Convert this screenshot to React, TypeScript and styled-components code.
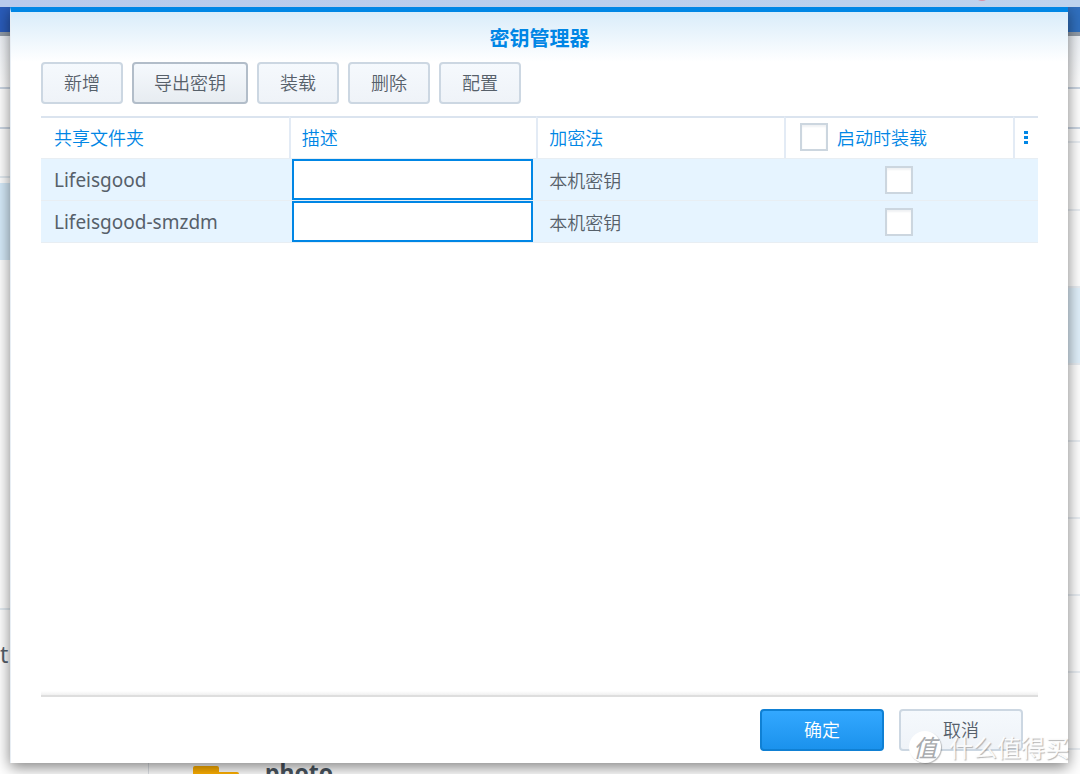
import React, { useState } from "react";
import styled, { createGlobalStyle } from "styled-components";

const GlobalStyle = createGlobalStyle`
  *, *::before, *::after { box-sizing: border-box; }
  body {
    margin: 0;
    font-family: "Noto Sans CJK SC", "Noto Sans", sans-serif;
    font-size: 18px;
    font-weight: 350;
    color: #56606a;
  }
  button, input { font: inherit; color: inherit; }
`;

const Desktop = styled.div`
  position: relative;
  min-height: 100vh;
  padding: 7px 12px 11px 10px;
  display: flex;
  overflow: hidden;
`;

/* The window that lies behind the dialog */
const BackWindow = styled.div`
  position: absolute;
  inset: 0;
  overflow: hidden;
  display: flex;
  flex-direction: column;
  background: #fff;
  font-family: "Noto Sans", "Noto Sans CJK SC", sans-serif;
`;

const Wallpaper = styled.div`
  position: relative;
  z-index: 1;
  height: 7px;
  flex: none;
  display: flex;
  justify-content: flex-end;
  padding-right: 90px;
  background: linear-gradient(90deg, #b8caec, #bdd3ee);
`;

const Badge = styled.span`
  width: 16px;
  height: 16px;
  margin-top: -15px;
  border-radius: 50%;
  background: #d88fa8;
`;

const BackTitle = styled.div`
  height: 29px;
  flex: none;
  background: linear-gradient(90deg, #2a5cba, #3070bf);
  border-bottom: 4px solid #929ca8;
`;

const BackBar = styled.div<{ $height: number; $shade?: boolean }>`
  height: ${(p) => p.$height}px;
  flex: none;
  border-bottom: 2px solid #cbd6e3;
  background: ${(p) => (p.$shade ? "linear-gradient(#edf1f6, #fff)" : "#fff")};
`;

const BackBody = styled.div`
  flex: 1;
  display: flex;
`;

const Side = styled.div`
  width: 149px;
  flex: none;
  border-right: 1px solid #dfe3e8;
`;

const SideItem = styled.div<{ $height: number; $active?: boolean; $line?: boolean }>`
  height: ${(p) => p.$height}px;
  background: ${(p) => (p.$active ? "#d6ebfa" : "transparent")};
  border-bottom: ${(p) => (p.$line ? "2px solid #e3ebf1" : "0")};
  font-size: 23px;
  line-height: 32px;
  font-weight: 400;
  display: flex;
  align-items: flex-end;
`;

const Folders = styled.div`
  flex: 1;
  padding-top: 12px;
`;

const FolderRow = styled.div<{ $active?: boolean; $height?: number }>`
  height: ${(p) => p.$height ?? 77}px;
  border-bottom: 2px solid #e9eef3;
  background: ${(p) => (p.$active ? "#e0f0fb" : "transparent")};
`;

const LastFolder = styled.div`
  display: flex;
  align-items: flex-start;
  gap: 26px;
  padding: 7px 44px;
  font-size: 23px;
  line-height: 30px;
  font-weight: 700;
  color: #4a5560;

  svg { margin-top: 9px; }
`;

const Dialog = styled.section`
  position: relative;
  flex: 1;
  display: flex;
  flex-direction: column;
  padding: 0 30px 12px;
  border-top: 5px solid #0086e5;
  border-left: 1px solid #e8eef4;
  background: linear-gradient(#d9ecfa, #fff 50px);
  box-shadow: 0 4px 14px rgba(0, 0, 0, 0.5);
`;

const Title = styled.h1`
  margin: 0;
  height: 50px;
  font-size: 20px;
  line-height: 52px;
  font-weight: 700;
  text-align: center;
  color: #0086e5;
`;

const Toolbar = styled.div`
  display: flex;
  gap: 9px;
  margin-bottom: 12px;
`;

const Button = styled.button<{ $kind?: "focus" | "primary"; $wide?: boolean }>`
  height: 42px;
  padding: 0 20px 2px;
  min-width: ${(p) => (p.$wide ? 124 : 82)}px;
  border-radius: 4px;
  line-height: 24px;
  border: 2px solid
    ${(p) => (p.$kind === "primary" ? "#0f80d4" : p.$kind === "focus" ? "#b2bdc9" : "#ccd7e2")};
  color: ${(p) => (p.$kind === "primary" ? "#fff" : "#56606a")};
  background: ${(p) =>
    p.$kind === "primary"
      ? "linear-gradient(#33a8ff, #1b92ec)"
      : p.$kind === "focus"
        ? "linear-gradient(#f5f9fd, #e7ecf1)"
        : "linear-gradient(#f5f9fd, #eff3f8)"};
`;

const Grid = styled.table`
  width: 100%;
  table-layout: fixed;
  border-collapse: separate;
  border-spacing: 0;
`;

const HeadCell = styled.th<{ $width?: number }>`
  width: ${(p) => (p.$width ? `${p.$width}px` : "auto")};
  height: 42px;
  padding: 0 0 2px ${(p) => (p.$width === 25 ? 0 : 11)}px;
  border-top: 2px solid #dbe4ef;
  border-left: 2px solid #e3ebf5;
  text-align: left;
  font-weight: inherit;
  line-height: 24px;
  color: #0086e5;

  &:first-child { border-left: 0; padding-left: 13px; }
`;

const Cell = styled.td<{ $kind?: "name" | "input" | "check" }>`
  height: 42px;
  border-top: 1px solid #e8eef3;
  padding: ${(p) => (p.$kind === "input" ? "0 3px" : p.$kind === "check" ? "0" : "0 0 0 13px")};
  text-align: ${(p) => (p.$kind === "check" ? "center" : "left")};
  line-height: 24px;
  background: #e6f4ff;
  ${(p) => p.$kind === "name" && `font-family: "Noto Sans", sans-serif; font-weight: 400; font-size: 19px;`}

  tr:last-child > & { border-bottom: 1px solid #e8eef3; height: 43px; }
`;

const TextBox = styled.input`
  display: block;
  width: 100%;
  height: 41px;
  padding: 0 8px;
  border: 2px solid #0086e5;
  border-radius: 0;
  background: #fff;
  outline: none;
`;

const Check = styled.input`
  appearance: none;
  display: block;
  width: 28px;
  height: 28px;
  margin: 0 auto;
  border: 2px solid #ccd6df;
  background: #fff;
  box-shadow: inset 0 2px 2px #f0f2f4;

  &:checked { background: #0086e5; }
`;

const CheckLabel = styled.label`
  display: flex;
  align-items: center;
  gap: 9px;
  padding-left: 3px;

  input { margin: 0; }
`;

const MenuButton = styled.button`
  display: flex;
  width: 100%;
  padding: 0 0 0 9px;
  border: 0;
  background: none;
`;

const Footer = styled.footer`
  display: flex;
  justify-content: flex-end;
  gap: 15px;
  margin-top: auto;
  padding: 12px 15px 0 0;
  position: relative;
  border-top: 2px solid #dedede;

  &::before {
    content: "";
    position: absolute;
    left: 0;
    right: 0;
    top: -6px;
    height: 4px;
    background: linear-gradient(#fff, #f0f0f0);
  }
`;

const Watermark = styled.div`
  position: absolute;
  right: 11px;
  bottom: 11px;
  display: flex;
  align-items: center;
  gap: 8px;
  font-size: 24px;
  line-height: 32px;
  font-weight: 400;
  color: rgba(255, 255, 255, 0.92);
  text-shadow: 1px 1px 1px rgba(110, 110, 110, 0.5);
  pointer-events: none;
`;

const Seal = styled.span`
  width: 32px;
  height: 32px;
  border-radius: 50%;
  background: #fff;
  box-shadow: 1px 1px 1px rgba(90, 90, 90, 0.4);
  color: #a9abae;
  text-shadow: none;
  text-align: center;
  font-style: italic;
`;

const folders = ["Lifeisgood", "Lifeisgood-smzdm"];

function KeyRow({ name }: { name: string }) {
  const [note, setNote] = useState("");
  return (
    <tr>
      <Cell $kind="name">{name}</Cell>
      <Cell $kind="input">
        <TextBox aria-label={`${name} 描述`} value={note} onChange={(e) => setNote(e.target.value)} />
      </Cell>
      <Cell>本机密钥</Cell>
      <Cell $kind="check">
        <Check type="checkbox" aria-label={`${name} 启动时装载`} />
      </Cell>
      <Cell $kind="check" />
    </tr>
  );
}

export default function App() {
  return (
    <>
      <GlobalStyle />
      <Desktop>
        <BackWindow>
          <Wallpaper>
            <Badge />
          </Wallpaper>
          <BackTitle />
          <BackBar $height={53} $shade />
          <BackBar $height={40} />
          <BackBody>
            <Side>
              <SideItem $height={49} $line />
              <SideItem $height={5} />
              <SideItem $height={77} $active />
              <SideItem $height={350} $line />
              <SideItem $height={60}>t</SideItem>
            </Side>
            <Folders>
              <FolderRow $height={2} />
              <FolderRow $height={68} />
              <FolderRow />
              <FolderRow $active />
              <FolderRow />
              <FolderRow />
              <FolderRow />
              <FolderRow />
              <FolderRow />
              <LastFolder>
                <svg width="46" height="30" viewBox="0 0 46 30" aria-hidden="true">
                  <path d="M0 2a2 2 0 0 1 2-2h22a2 2 0 0 1 2 2v4h18a2 2 0 0 1 2 2v22H0z" fill="#ffb000" />
                </svg>
                photo
              </LastFolder>
            </Folders>
          </BackBody>
        </BackWindow>

        <Dialog role="dialog" aria-labelledby="dialog-title">
          <Title id="dialog-title">密钥管理器</Title>
          <Toolbar>
            <Button>新增</Button>
            <Button $kind="focus">导出密钥</Button>
            <Button>装载</Button>
            <Button>删除</Button>
            <Button>配置</Button>
          </Toolbar>
          <Grid>
            <thead>
              <tr>
                <HeadCell>共享文件夹</HeadCell>
                <HeadCell>描述</HeadCell>
                <HeadCell>加密法</HeadCell>
                <HeadCell $width={229}>
                  <CheckLabel>
                    <Check type="checkbox" />
                    启动时装载
                  </CheckLabel>
                </HeadCell>
                <HeadCell $width={25}>
                  <MenuButton aria-label="列">
                    <svg width="4" height="14" viewBox="0 0 4 14" fill="#0086e5" aria-hidden="true">
                      <path d="M0 1h4v3H0zM0 6h4v3H0zM0 11h4v3H0z" />
                    </svg>
                  </MenuButton>
                </HeadCell>
              </tr>
            </thead>
            <tbody>
              {folders.map((name) => (
                <KeyRow key={name} name={name} />
              ))}
            </tbody>
          </Grid>
          <Footer>
            <Button $kind="primary" $wide>确定</Button>
            <Button $wide>取消</Button>
          </Footer>
        </Dialog>

        <Watermark>
          <Seal>值</Seal>
          什么值得买
        </Watermark>
      </Desktop>
    </>
  );
}
